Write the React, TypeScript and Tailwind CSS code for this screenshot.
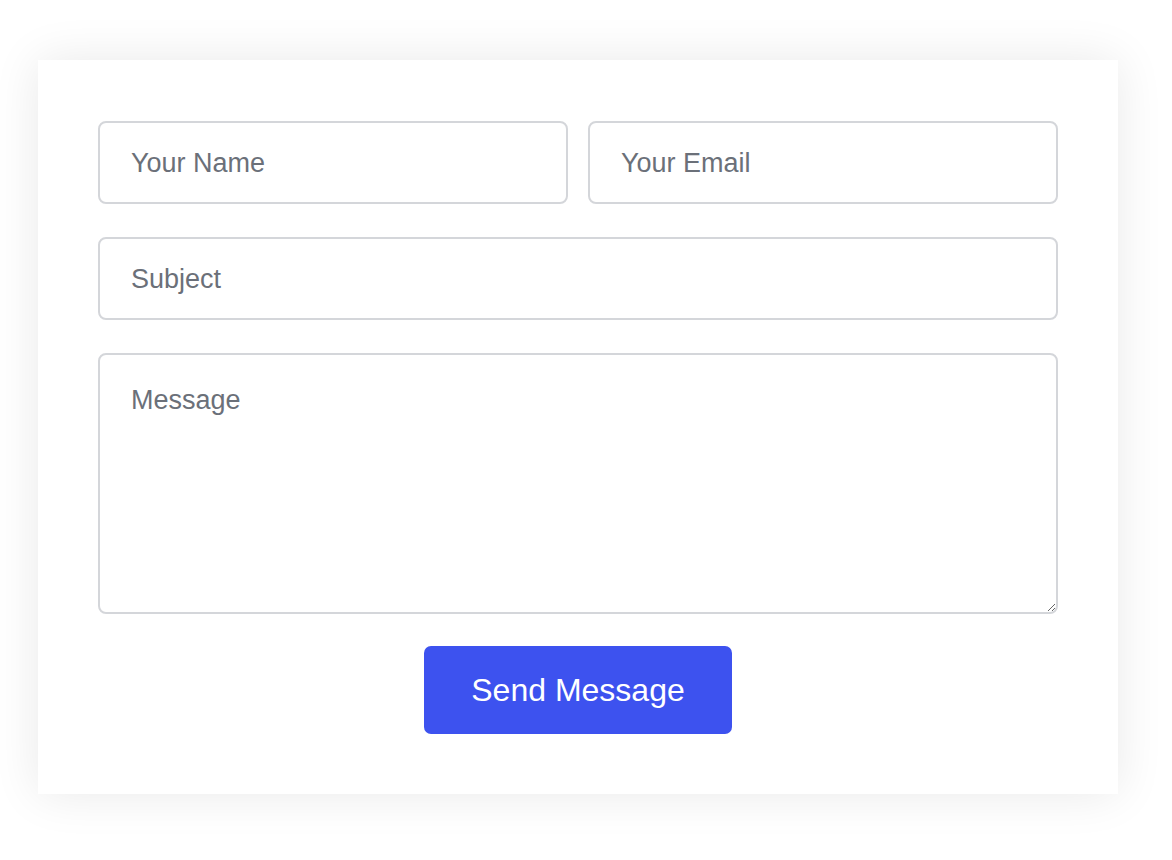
export default function App() {
  return (
    <div className="min-h-screen bg-white pt-[60px] pl-[38px]" style={{ fontFamily: '"Liberation Sans", Arial, sans-serif' }}>
      <form className="w-[1080px] bg-white px-[60px] pt-[61px] pb-[60px] shadow-[0_0_45px_rgba(0,0,0,0.09)] flex flex-col gap-[33px]">
        <div className="flex gap-[20px]">
          <input
            type="text"
            placeholder="Your Name"
            className="flex-1 min-w-0 h-[83px] rounded-[8px] border-2 border-[#d4d6da] px-[31px] pt-[2px] text-[27px] text-gray-800 placeholder:text-[#6b7079] outline-none"
          />
          <input
            type="email"
            placeholder="Your Email"
            className="flex-1 min-w-0 h-[83px] rounded-[8px] border-2 border-[#d4d6da] px-[31px] pt-[2px] text-[27px] text-gray-800 placeholder:text-[#6b7079] outline-none"
          />
        </div>
        <input
          type="text"
          placeholder="Subject"
          className="h-[83px] rounded-[8px] border-2 border-[#d4d6da] px-[31px] pt-[2px] text-[27px] text-gray-800 placeholder:text-[#6b7079] outline-none"
        />
        <textarea
          placeholder="Message"
          className="h-[261px] rounded-[8px] border-2 border-[#d4d6da] px-[31px] pt-[29px] pb-[20px] text-[27px] leading-[32px] text-gray-800 placeholder:text-[#6b7079] outline-none"
        />
        <div className="flex justify-center -mt-[1px]">
          <button
            type="submit"
            className="w-[308px] h-[88px] rounded-[7px] bg-[#3d52ef] text-white text-[32px]"
          >
            Send Message
          </button>
        </div>
      </form>
    </div>
  );
}
